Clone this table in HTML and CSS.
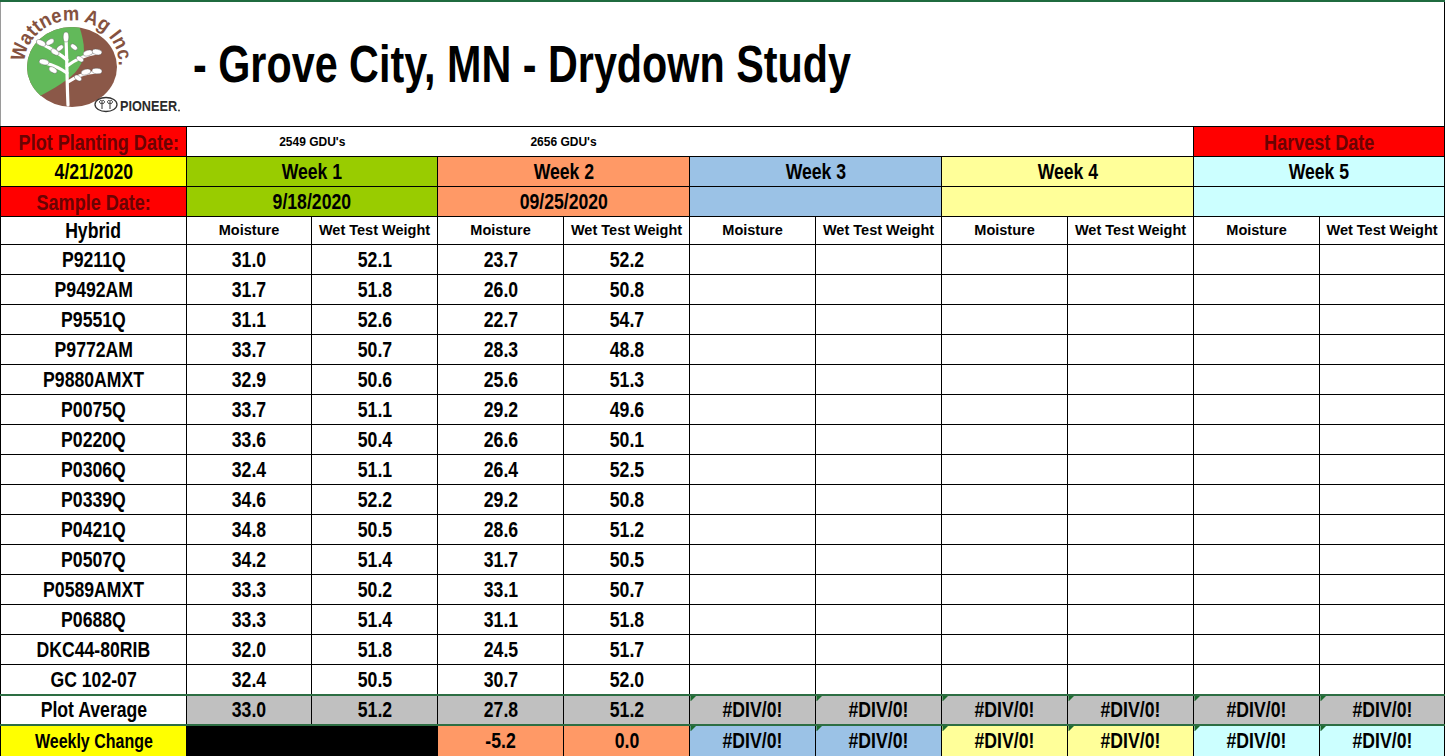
FILE: index.html
```html
<!DOCTYPE html>
<html>
<head>
<meta charset="utf-8">
<link rel="stylesheet" href="styles.css">
</head>
<body>
<div class="sheet">
  <div class="top">
    <svg class="logo" width="185" height="124" viewBox="0 2 185 124">
      <defs>
        <clipPath id="disc"><ellipse cx="72" cy="67" rx="45" ry="40"/></clipPath>
        <path id="arc" d="M24.7 62 A47 43 0 1 1 117.5 73" fill="none"/>
      </defs>
      <ellipse cx="72" cy="67" rx="45" ry="40" fill="#8b5848"/>
      <path clip-path="url(#disc)" fill="#62b95a" d="M20 20 L77 20 C83 36 87 52 81 64 C75 76 62 84 40 96 L20 104 Z"/>
      <g stroke="#fff" stroke-width="3.2" fill="none" stroke-linecap="round">
        <path d="M68 105 C67 85 67 60 66 38"/>
        <path d="M67 60 C60 54 52 49 42 44"/>
        <path d="M67 73 C60 68 53 65 45 63"/>
        <path d="M67 66 C75 60 85 55 97 53"/>
        <path d="M68 82 C75 77 85 73 97 72"/>
      </g>
      <g fill="#fff" stroke="#555" stroke-width="0.4">
        <ellipse cx="66" cy="37" rx="2.8" ry="5"/>
        <ellipse cx="41" cy="43" rx="5" ry="2.8" transform="rotate(25 41 43)"/>
        <ellipse cx="50" cy="42" rx="4.5" ry="2.6" transform="rotate(-30 50 42)"/>
        <ellipse cx="55" cy="52" rx="4.5" ry="2.6" transform="rotate(30 55 52)"/>
        <ellipse cx="44" cy="62" rx="5" ry="2.8" transform="rotate(10 44 62)"/>
        <ellipse cx="53" cy="70" rx="4.5" ry="2.6" transform="rotate(30 53 70)"/>
        <ellipse cx="60" cy="48" rx="4" ry="2.4" transform="rotate(-40 60 48)"/>
        <ellipse cx="74" cy="47" rx="4" ry="2.4" transform="rotate(40 74 47)"/>
        <ellipse cx="88" cy="53" rx="5" ry="2.8" transform="rotate(-15 88 53)"/>
        <ellipse cx="97" cy="52" rx="5" ry="2.8" transform="rotate(10 97 52)"/>
        <ellipse cx="80" cy="59" rx="4" ry="2.4" transform="rotate(30 80 59)"/>
        <ellipse cx="86" cy="72" rx="5" ry="2.8" transform="rotate(-15 86 72)"/>
        <ellipse cx="97" cy="71" rx="5" ry="2.8" transform="rotate(5 97 71)"/>
        <ellipse cx="78" cy="78" rx="4" ry="2.4" transform="rotate(30 78 78)"/>
      </g>
      <text class="arc-text"><textPath href="#arc" textLength="142" lengthAdjust="spacingAndGlyphs">Wattnem Ag Inc.</textPath></text>
      <ellipse cx="106" cy="104.5" rx="11" ry="7" fill="none" stroke="#333" stroke-width="1.3"/>
      <g stroke="#333" stroke-width="1" fill="none">
        <path d="M102 109 V102 M99.5 101.5 C100 104 101 104 102 103 C103 104 104 104 104.5 101.5 C103.5 100 102.5 100 102 101.5 C101.5 100 100.5 100 99.5 101.5"/>
        <path d="M110 109 V102 M107.5 101.5 C108 104 109 104 110 103 C111 104 112 104 112.5 101.5 C111.5 100 110.5 100 110 101.5 C109.5 100 108.5 100 107.5 101.5"/>
      </g>
      <text class="pioneer" transform="translate(120 111) scale(0.82 1)">PIONEER</text>
      <circle cx="179" cy="110.5" r="0.9" fill="#333"/>
    </svg>
    <h1 class="title">- Grove City, MN - Drydown Study</h1>
  </div>
  <table class="grid">
    <colgroup>
      <col class="c-hyb"><col class="c-edge"><col class="c-sub"><col class="c-sub"><col class="c-sub"><col class="c-sub"><col class="c-sub"><col class="c-sub"><col class="c-sub"><col class="c-sub"><col class="c-edge">
    </colgroup>
    <tr class="r-plant">
      <td class="lbl red"><span class="n">Plot Planting Date:</span></td>
      <td colspan="2" class="gdu open">2549 GDU's</td>
      <td colspan="2" class="gdu open">2656 GDU's</td>
      <td colspan="4" class="open"></td>
      <td colspan="2" class="lbl red"><span class="n">Harvest Date</span></td>
    </tr>
    <tr class="r-week">
      <td class="yellow"><span class="n">4/21/2020</span></td>
      <td colspan="2" class="green"><span class="n">Week 1</span></td>
      <td colspan="2" class="orange"><span class="n">Week 2</span></td>
      <td colspan="2" class="blue"><span class="n">Week 3</span></td>
      <td colspan="2" class="lyellow"><span class="n">Week 4</span></td>
      <td colspan="2" class="cyan"><span class="n">Week 5</span></td>
    </tr>
    <tr class="r-week">
      <td class="lbl red"><span class="n">Sample Date:</span></td>
      <td colspan="2" class="green"><span class="n">9/18/2020</span></td>
      <td colspan="2" class="orange"><span class="n">09/25/2020</span></td>
      <td colspan="2" class="blue"></td>
      <td colspan="2" class="lyellow"></td>
      <td colspan="2" class="cyan"></td>
    </tr>
    <tr class="r-head">
      <td><span class="n">Hybrid</span></td>
      <td class="sub">Moisture</td><td class="sub">Wet Test Weight</td>
      <td class="sub">Moisture</td><td class="sub">Wet Test Weight</td>
      <td class="sub">Moisture</td><td class="sub">Wet Test Weight</td>
      <td class="sub">Moisture</td><td class="sub">Wet Test Weight</td>
      <td class="sub">Moisture</td><td class="sub">Wet Test Weight</td>
    </tr>
    <tr class="r-data"><td><span class="n">P9211Q</span></td><td><span class="n">31.0</span></td><td><span class="n">52.1</span></td><td><span class="n">23.7</span></td><td><span class="n">52.2</span></td><td></td><td></td><td></td><td></td><td></td><td></td></tr>
    <tr class="r-data"><td><span class="n">P9492AM</span></td><td><span class="n">31.7</span></td><td><span class="n">51.8</span></td><td><span class="n">26.0</span></td><td><span class="n">50.8</span></td><td></td><td></td><td></td><td></td><td></td><td></td></tr>
    <tr class="r-data"><td><span class="n">P9551Q</span></td><td><span class="n">31.1</span></td><td><span class="n">52.6</span></td><td><span class="n">22.7</span></td><td><span class="n">54.7</span></td><td></td><td></td><td></td><td></td><td></td><td></td></tr>
    <tr class="r-data"><td><span class="n">P9772AM</span></td><td><span class="n">33.7</span></td><td><span class="n">50.7</span></td><td><span class="n">28.3</span></td><td><span class="n">48.8</span></td><td></td><td></td><td></td><td></td><td></td><td></td></tr>
    <tr class="r-data"><td><span class="n">P9880AMXT</span></td><td><span class="n">32.9</span></td><td><span class="n">50.6</span></td><td><span class="n">25.6</span></td><td><span class="n">51.3</span></td><td></td><td></td><td></td><td></td><td></td><td></td></tr>
    <tr class="r-data"><td><span class="n">P0075Q</span></td><td><span class="n">33.7</span></td><td><span class="n">51.1</span></td><td><span class="n">29.2</span></td><td><span class="n">49.6</span></td><td></td><td></td><td></td><td></td><td></td><td></td></tr>
    <tr class="r-data"><td><span class="n">P0220Q</span></td><td><span class="n">33.6</span></td><td><span class="n">50.4</span></td><td><span class="n">26.6</span></td><td><span class="n">50.1</span></td><td></td><td></td><td></td><td></td><td></td><td></td></tr>
    <tr class="r-data"><td><span class="n">P0306Q</span></td><td><span class="n">32.4</span></td><td><span class="n">51.1</span></td><td><span class="n">26.4</span></td><td><span class="n">52.5</span></td><td></td><td></td><td></td><td></td><td></td><td></td></tr>
    <tr class="r-data"><td><span class="n">P0339Q</span></td><td><span class="n">34.6</span></td><td><span class="n">52.2</span></td><td><span class="n">29.2</span></td><td><span class="n">50.8</span></td><td></td><td></td><td></td><td></td><td></td><td></td></tr>
    <tr class="r-data"><td><span class="n">P0421Q</span></td><td><span class="n">34.8</span></td><td><span class="n">50.5</span></td><td><span class="n">28.6</span></td><td><span class="n">51.2</span></td><td></td><td></td><td></td><td></td><td></td><td></td></tr>
    <tr class="r-data"><td><span class="n">P0507Q</span></td><td><span class="n">34.2</span></td><td><span class="n">51.4</span></td><td><span class="n">31.7</span></td><td><span class="n">50.5</span></td><td></td><td></td><td></td><td></td><td></td><td></td></tr>
    <tr class="r-data"><td><span class="n">P0589AMXT</span></td><td><span class="n">33.3</span></td><td><span class="n">50.2</span></td><td><span class="n">33.1</span></td><td><span class="n">50.7</span></td><td></td><td></td><td></td><td></td><td></td><td></td></tr>
    <tr class="r-data"><td><span class="n">P0688Q</span></td><td><span class="n">33.3</span></td><td><span class="n">51.4</span></td><td><span class="n">31.1</span></td><td><span class="n">51.8</span></td><td></td><td></td><td></td><td></td><td></td><td></td></tr>
    <tr class="r-data"><td><span class="n">DKC44-80RIB</span></td><td><span class="n">32.0</span></td><td><span class="n">51.8</span></td><td><span class="n">24.5</span></td><td><span class="n">51.7</span></td><td></td><td></td><td></td><td></td><td></td><td></td></tr>
    <tr class="r-data"><td><span class="n">GC 102-07</span></td><td><span class="n">32.4</span></td><td><span class="n">50.5</span></td><td><span class="n">30.7</span></td><td><span class="n">52.0</span></td><td></td><td></td><td></td><td></td><td></td><td></td></tr>
    <tr class="r-avg">
      <td><span class="n">Plot Average</span></td>
      <td class="gray"><span class="n">33.0</span></td><td class="gray"><span class="n">51.2</span></td><td class="gray"><span class="n">27.8</span></td><td class="gray"><span class="n">51.2</span></td>
      <td class="gray err"><span class="n">#DIV/0!</span></td><td class="gray err"><span class="n">#DIV/0!</span></td><td class="gray err"><span class="n">#DIV/0!</span></td><td class="gray err"><span class="n">#DIV/0!</span></td><td class="gray err"><span class="n">#DIV/0!</span></td><td class="gray err"><span class="n">#DIV/0!</span></td>
    </tr>
    <tr class="r-chg">
      <td class="yellow wk"><span class="n">Weekly Change</span></td>
      <td class="black"></td><td class="black"></td>
      <td class="orange"><span class="n">-5.2</span></td><td class="orange"><span class="n">0.0</span></td>
      <td class="blue err"><span class="n">#DIV/0!</span></td><td class="blue err"><span class="n">#DIV/0!</span></td>
      <td class="lyellow err"><span class="n">#DIV/0!</span></td><td class="lyellow err"><span class="n">#DIV/0!</span></td>
      <td class="cyan err"><span class="n">#DIV/0!</span></td><td class="cyan err"><span class="n">#DIV/0!</span></td>
    </tr>
  </table>
</div>
</body>
</html>
```

FILE: styles.css
```css
html, body {
  margin: 0;
  padding: 0;
  background: #fff;
}

.sheet {
  width: 1445px;
  height: 756px;
  overflow: hidden;
  border-top: 2px solid #1f6b3f;
  box-sizing: border-box;
  font-family: "Liberation Sans", Arial, sans-serif;
  color: #000;
}

.top {
  height: 124px;
  display: flex;
  align-items: center;
  border-left: 1px solid #9a9a9a;
  border-right: 1px solid #000;
  box-sizing: border-box;
}

.logo {
  flex: none;
  display: block;
  margin-left: -1px;
}

.arc-text {
  font-family: "Liberation Sans", sans-serif;
  font-weight: bold;
  font-size: 20px;
  fill: #85523f;
}

.pioneer {
  font-family: "Liberation Sans", sans-serif;
  font-weight: bold;
  font-size: 15.5px;
  fill: #2b2b2b;
}

.title {
  margin: 0 0 0 8px;
  font-size: 51px;
  font-weight: bold;
  line-height: 1;
  white-space: nowrap;
  transform: scaleX(0.81);
  transform-origin: left center;
}

.grid {
  border-collapse: collapse;
  table-layout: fixed;
  width: 1444px;
}

.c-hyb { width: 186px; }
.c-sub { width: 126px; }
.c-edge { width: 125px; }

.grid td {
  border: 1px solid #000;
  padding: 0;
  text-align: center;
  vertical-align: middle;
  font-size: 21.5px;
  font-weight: bold;
  line-height: 1;
  white-space: nowrap;
  overflow: hidden;
}

.n {
  display: inline-block;
  transform: scaleX(0.82);
  position: relative;
  top: 1px;
}

.r-plant td, .r-week td { height: 29px; }
.r-head td { height: 27px; }
.r-data td { height: 29px; }
.r-avg td { height: 28px; }
.r-chg td { height: 30px; }

.grid td.open {
  border-left: none;
  border-right: none;
}

.grid td.lbl {
  color: #6a0303;
  font-size: 22px;
}

.grid td.gdu {
  font-size: 12px;
}

.grid td.sub {
  font-size: 14.5px;
}

.grid td.wk {
  font-size: 19.5px;
}

.r-avg td {
  border-top: 2px solid #2d6e43;
  border-bottom: 2px solid #2d6e43;
}

.red { background-color: #ff0000; }
.yellow { background-color: #ffff00; }
.green { background-color: #99cc00; }
.orange { background-color: #ff9966; }
.blue { background-color: #9bc2e6; }
.lyellow { background-color: #ffff99; }
.cyan { background-color: #ccffff; }
.gray { background-color: #c0c0c0; }
.black { background-color: #000; }

.err {
  background-image: linear-gradient(135deg, #1d6b2f 4px, transparent 4px);
}
```
